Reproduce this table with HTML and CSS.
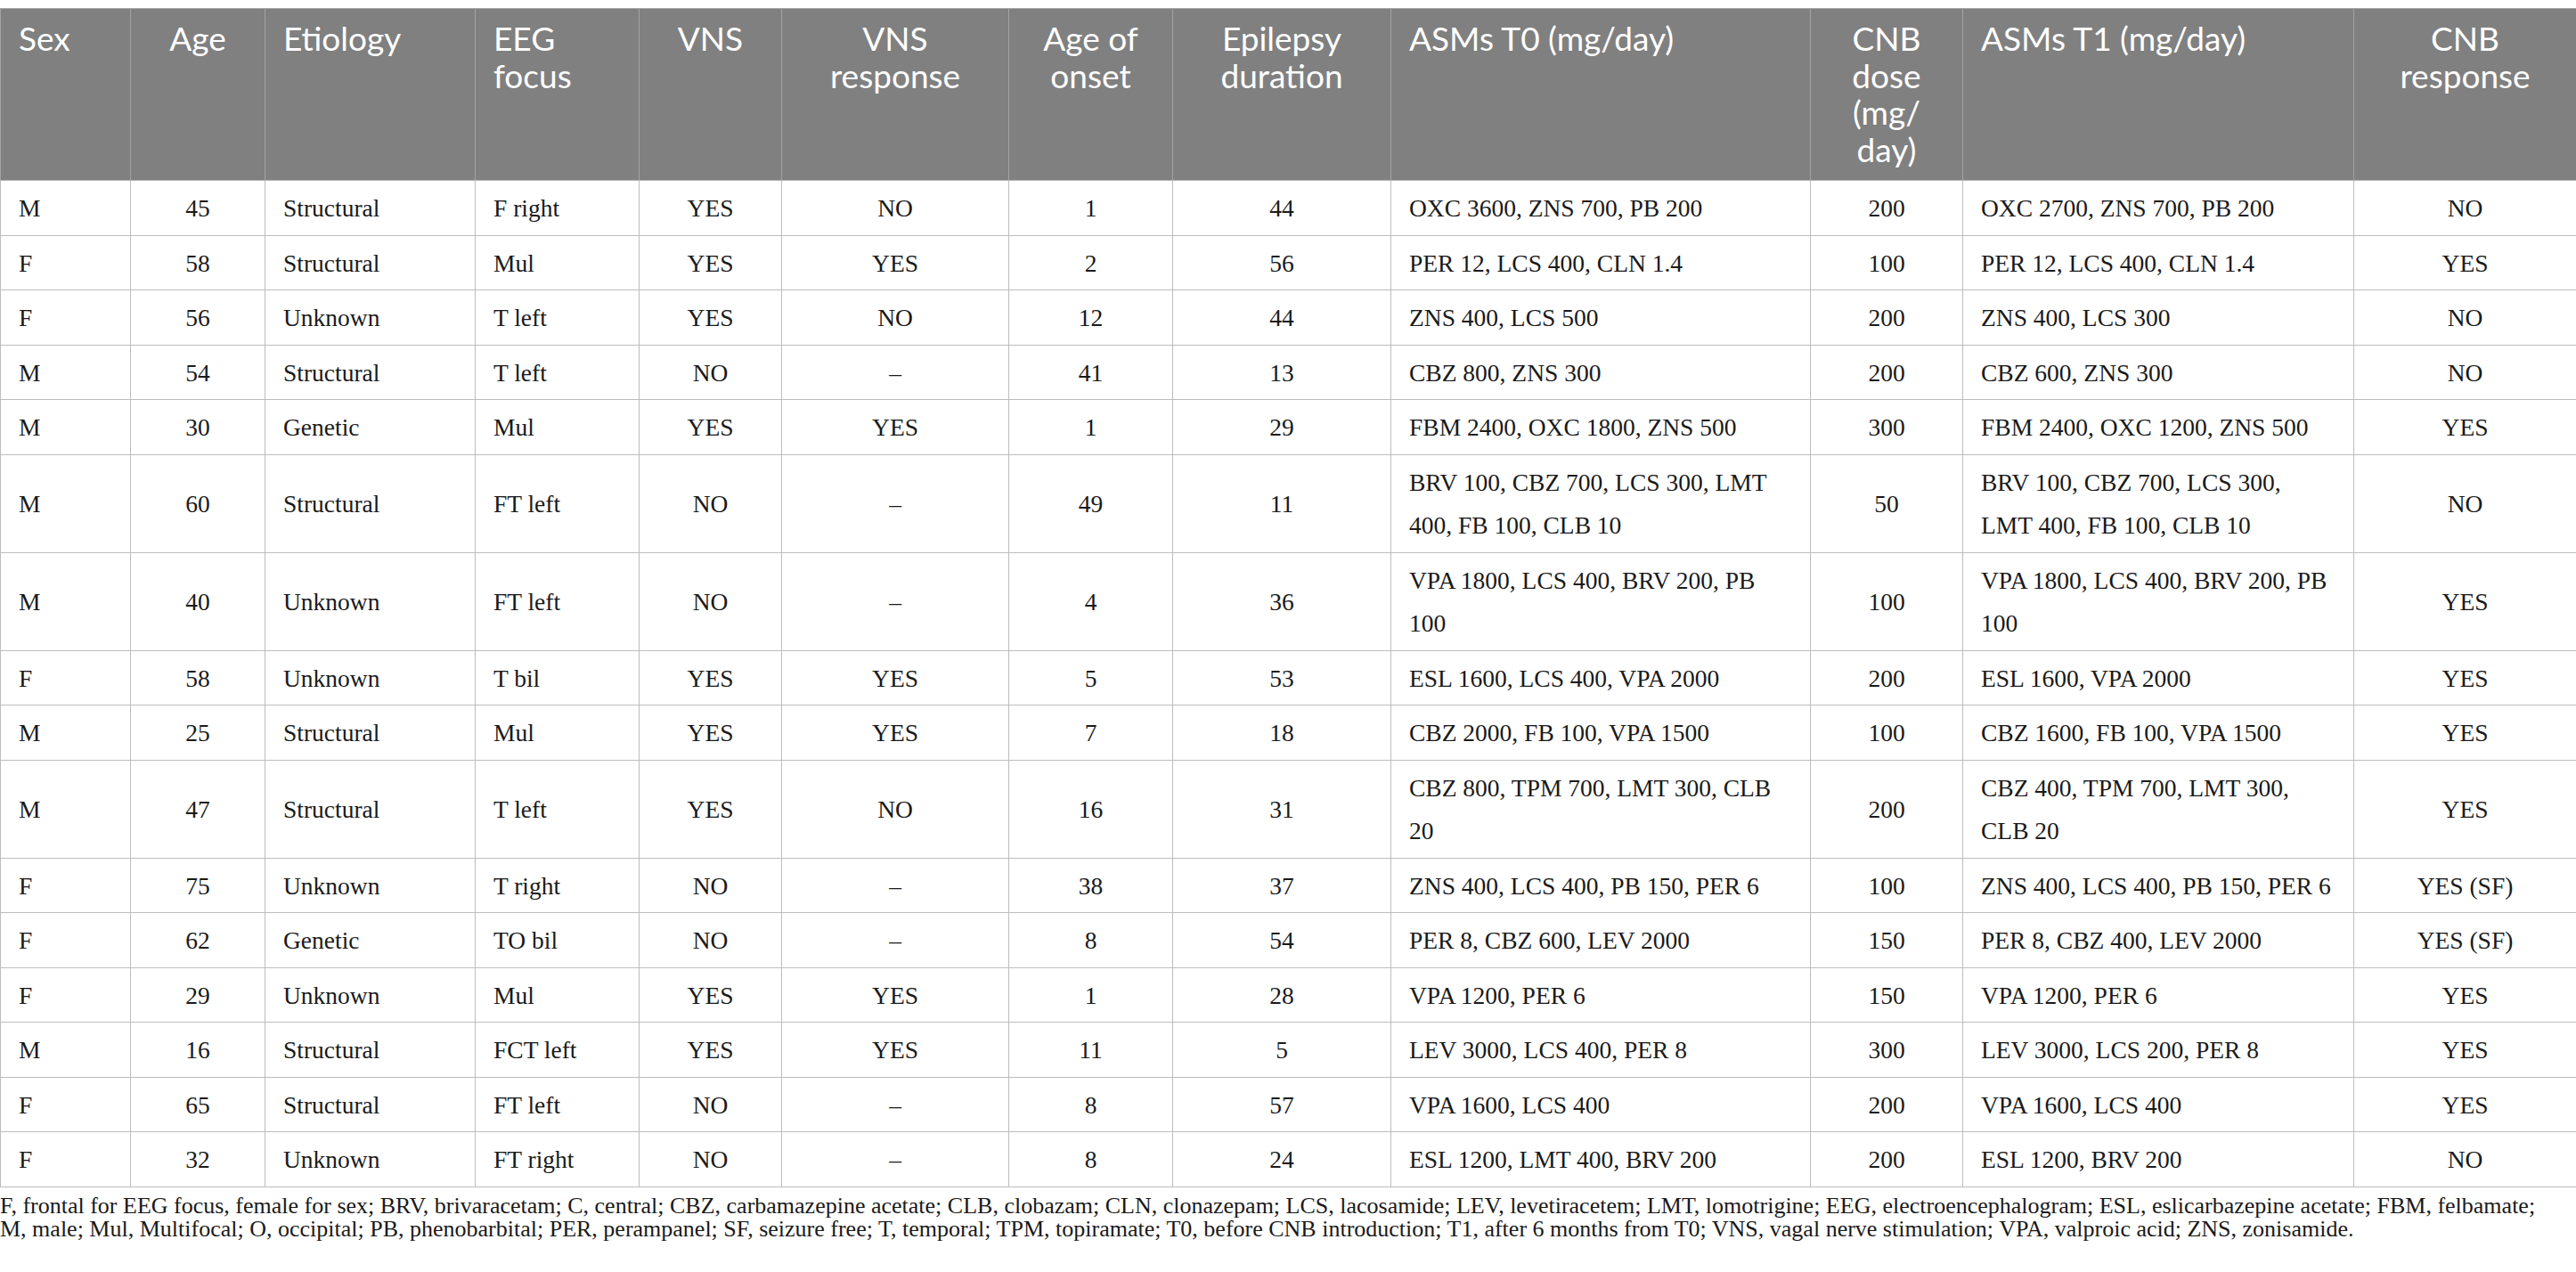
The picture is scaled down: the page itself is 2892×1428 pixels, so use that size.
FILE: index.html
```html
<!DOCTYPE html>
<html>
<head>
  <meta charset="UTF-8">
  <title>Patients treated with cenobamate</title>
  <link rel="stylesheet" href="styles.css">
</head>
<body>
  <table class="data">
    <colgroup>
      <col style="width: 146px">
      <col style="width: 151px">
      <col style="width: 236px">
      <col style="width: 184px">
      <col style="width: 160px">
      <col style="width: 255px">
      <col style="width: 184px">
      <col style="width: 245px">
      <col style="width: 471px">
      <col style="width: 171px">
      <col style="width: 439px">
      <col style="width: 250px">
    </colgroup>
    <thead>
      <tr>
        <th>Sex</th>
        <th>Age</th>
        <th>Etiology</th>
        <th>EEG focus</th>
        <th>VNS</th>
        <th>VNS response</th>
        <th>Age of onset</th>
        <th>Epilepsy duration</th>
        <th>ASMs T0 (mg/day)</th>
        <th>CNB dose (mg/<wbr>day)</th>
        <th>ASMs T1 (mg/day)</th>
        <th>CNB response</th>
      </tr>
    </thead>
    <tbody>
      <tr><td>M</td><td>45</td><td>Structural</td><td>F right</td><td>YES</td><td>NO</td><td>1</td><td>44</td><td>OXC 3600, ZNS 700, PB 200</td><td>200</td><td>OXC 2700, ZNS 700, PB 200</td><td>NO</td></tr>
      <tr><td>F</td><td>58</td><td>Structural</td><td>Mul</td><td>YES</td><td>YES</td><td>2</td><td>56</td><td>PER 12, LCS 400, CLN 1.4</td><td>100</td><td>PER 12, LCS 400, CLN 1.4</td><td>YES</td></tr>
      <tr><td>F</td><td>56</td><td>Unknown</td><td>T left</td><td>YES</td><td>NO</td><td>12</td><td>44</td><td>ZNS 400, LCS 500</td><td>200</td><td>ZNS 400, LCS 300</td><td>NO</td></tr>
      <tr><td>M</td><td>54</td><td>Structural</td><td>T left</td><td>NO</td><td>–</td><td>41</td><td>13</td><td>CBZ 800, ZNS 300</td><td>200</td><td>CBZ 600, ZNS 300</td><td>NO</td></tr>
      <tr><td>M</td><td>30</td><td>Genetic</td><td>Mul</td><td>YES</td><td>YES</td><td>1</td><td>29</td><td>FBM 2400, OXC 1800, ZNS 500</td><td>300</td><td>FBM 2400, OXC 1200, ZNS 500</td><td>YES</td></tr>
      <tr><td>M</td><td>60</td><td>Structural</td><td>FT left</td><td>NO</td><td>–</td><td>49</td><td>11</td><td>BRV 100, CBZ 700, LCS 300, LMT 400, FB 100, CLB 10</td><td>50</td><td>BRV 100, CBZ 700, LCS 300, LMT 400, FB 100, CLB 10</td><td>NO</td></tr>
      <tr><td>M</td><td>40</td><td>Unknown</td><td>FT left</td><td>NO</td><td>–</td><td>4</td><td>36</td><td>VPA 1800, LCS 400, BRV 200, PB 100</td><td>100</td><td>VPA 1800, LCS 400, BRV 200, PB 100</td><td>YES</td></tr>
      <tr><td>F</td><td>58</td><td>Unknown</td><td>T bil</td><td>YES</td><td>YES</td><td>5</td><td>53</td><td>ESL 1600, LCS 400, VPA 2000</td><td>200</td><td>ESL 1600, VPA 2000</td><td>YES</td></tr>
      <tr><td>M</td><td>25</td><td>Structural</td><td>Mul</td><td>YES</td><td>YES</td><td>7</td><td>18</td><td>CBZ 2000, FB 100, VPA 1500</td><td>100</td><td>CBZ 1600, FB 100, VPA 1500</td><td>YES</td></tr>
      <tr><td>M</td><td>47</td><td>Structural</td><td>T left</td><td>YES</td><td>NO</td><td>16</td><td>31</td><td>CBZ 800, TPM 700, LMT 300, CLB 20</td><td>200</td><td>CBZ 400, TPM 700, LMT 300, CLB 20</td><td>YES</td></tr>
      <tr><td>F</td><td>75</td><td>Unknown</td><td>T right</td><td>NO</td><td>–</td><td>38</td><td>37</td><td>ZNS 400, LCS 400, PB 150, PER 6</td><td>100</td><td>ZNS 400, LCS 400, PB 150, PER 6</td><td>YES (SF)</td></tr>
      <tr><td>F</td><td>62</td><td>Genetic</td><td>TO bil</td><td>NO</td><td>–</td><td>8</td><td>54</td><td>PER 8, CBZ 600, LEV 2000</td><td>150</td><td>PER 8, CBZ 400, LEV 2000</td><td>YES (SF)</td></tr>
      <tr><td>F</td><td>29</td><td>Unknown</td><td>Mul</td><td>YES</td><td>YES</td><td>1</td><td>28</td><td>VPA 1200, PER 6</td><td>150</td><td>VPA 1200, PER 6</td><td>YES</td></tr>
      <tr><td>M</td><td>16</td><td>Structural</td><td>FCT left</td><td>YES</td><td>YES</td><td>11</td><td>5</td><td>LEV 3000, LCS 400, PER 8</td><td>300</td><td>LEV 3000, LCS 200, PER 8</td><td>YES</td></tr>
      <tr><td>F</td><td>65</td><td>Structural</td><td>FT left</td><td>NO</td><td>–</td><td>8</td><td>57</td><td>VPA 1600, LCS 400</td><td>200</td><td>VPA 1600, LCS 400</td><td>YES</td></tr>
      <tr><td>F</td><td>32</td><td>Unknown</td><td>FT right</td><td>NO</td><td>–</td><td>8</td><td>24</td><td>ESL 1200, LMT 400, BRV 200</td><td>200</td><td>ESL 1200, BRV 200</td><td>NO</td></tr>
    </tbody>
  </table>

  <p class="table-note">F, frontal for EEG focus, female for sex; BRV, brivaracetam; C, central; CBZ, carbamazepine acetate; CLB, clobazam; CLN, clonazepam; LCS, lacosamide; LEV, levetiracetem; LMT, lomotrigine; EEG, electroencephalogram; ESL, eslicarbazepine acetate; FBM, felbamate; M,&nbsp;male; Mul, Multifocal; O, occipital; PB, phenobarbital; PER, perampanel; SF, seizure free; T, temporal; TPM, topiramate; T0, before CNB introduction; T1, after 6 months from T0; VNS, vagal nerve stimulation; VPA, valproic acid; ZNS, zonisamide.</p>
</body>
</html>
```

FILE: styles.css
```css
body {
  margin: 0;
  background-color: #fff;
  color: #1a1a1a;
  font-family: "Liberation Serif", "Times New Roman", serif;
}
.data {
  width: 2892px;
  margin-top: 9px;
  border-collapse: collapse;
  table-layout: fixed;
  border-top: 1px solid #a9a9a9;
}
.data th {
  background-color: #808080;
  color: #fff;
  font-family: Lato, "Open Sans", sans-serif;
  font-weight: 400;
  font-size: 37px;
  line-height: 41.5px;
  text-align: left;
  vertical-align: top;
  padding: 12px 20px 14px;
  border-left: 1px solid #a3a3a3;
  border-right: 1px solid #a3a3a3;
  border-bottom: 1px solid #b5b5b5;
}
.data td {
  font-size: 27.5px;
  line-height: 48.5px;
  padding: 7px 20px 5px;
  vertical-align: middle;
  border: 1px solid #bdbdbd;
}
/* centred columns: Age, VNS, VNS response, onset, duration, dose, CNB response */
.data th:nth-child(2), .data td:nth-child(2),
.data th:nth-child(5), .data td:nth-child(5),
.data th:nth-child(6), .data td:nth-child(6),
.data th:nth-child(7), .data td:nth-child(7),
.data th:nth-child(8), .data td:nth-child(8),
.data th:nth-child(10), .data td:nth-child(10),
.data th:nth-child(12), .data td:nth-child(12) {
  text-align: center;
}
/* drug lists */
.data td:nth-child(9) {
  padding-right: 30px;
}
.data td:nth-child(11) {
  padding-right: 18px;
}
.table-note {
  margin: 8px 0 0;
  font-size: 26px;
  line-height: 26px;
}
```
